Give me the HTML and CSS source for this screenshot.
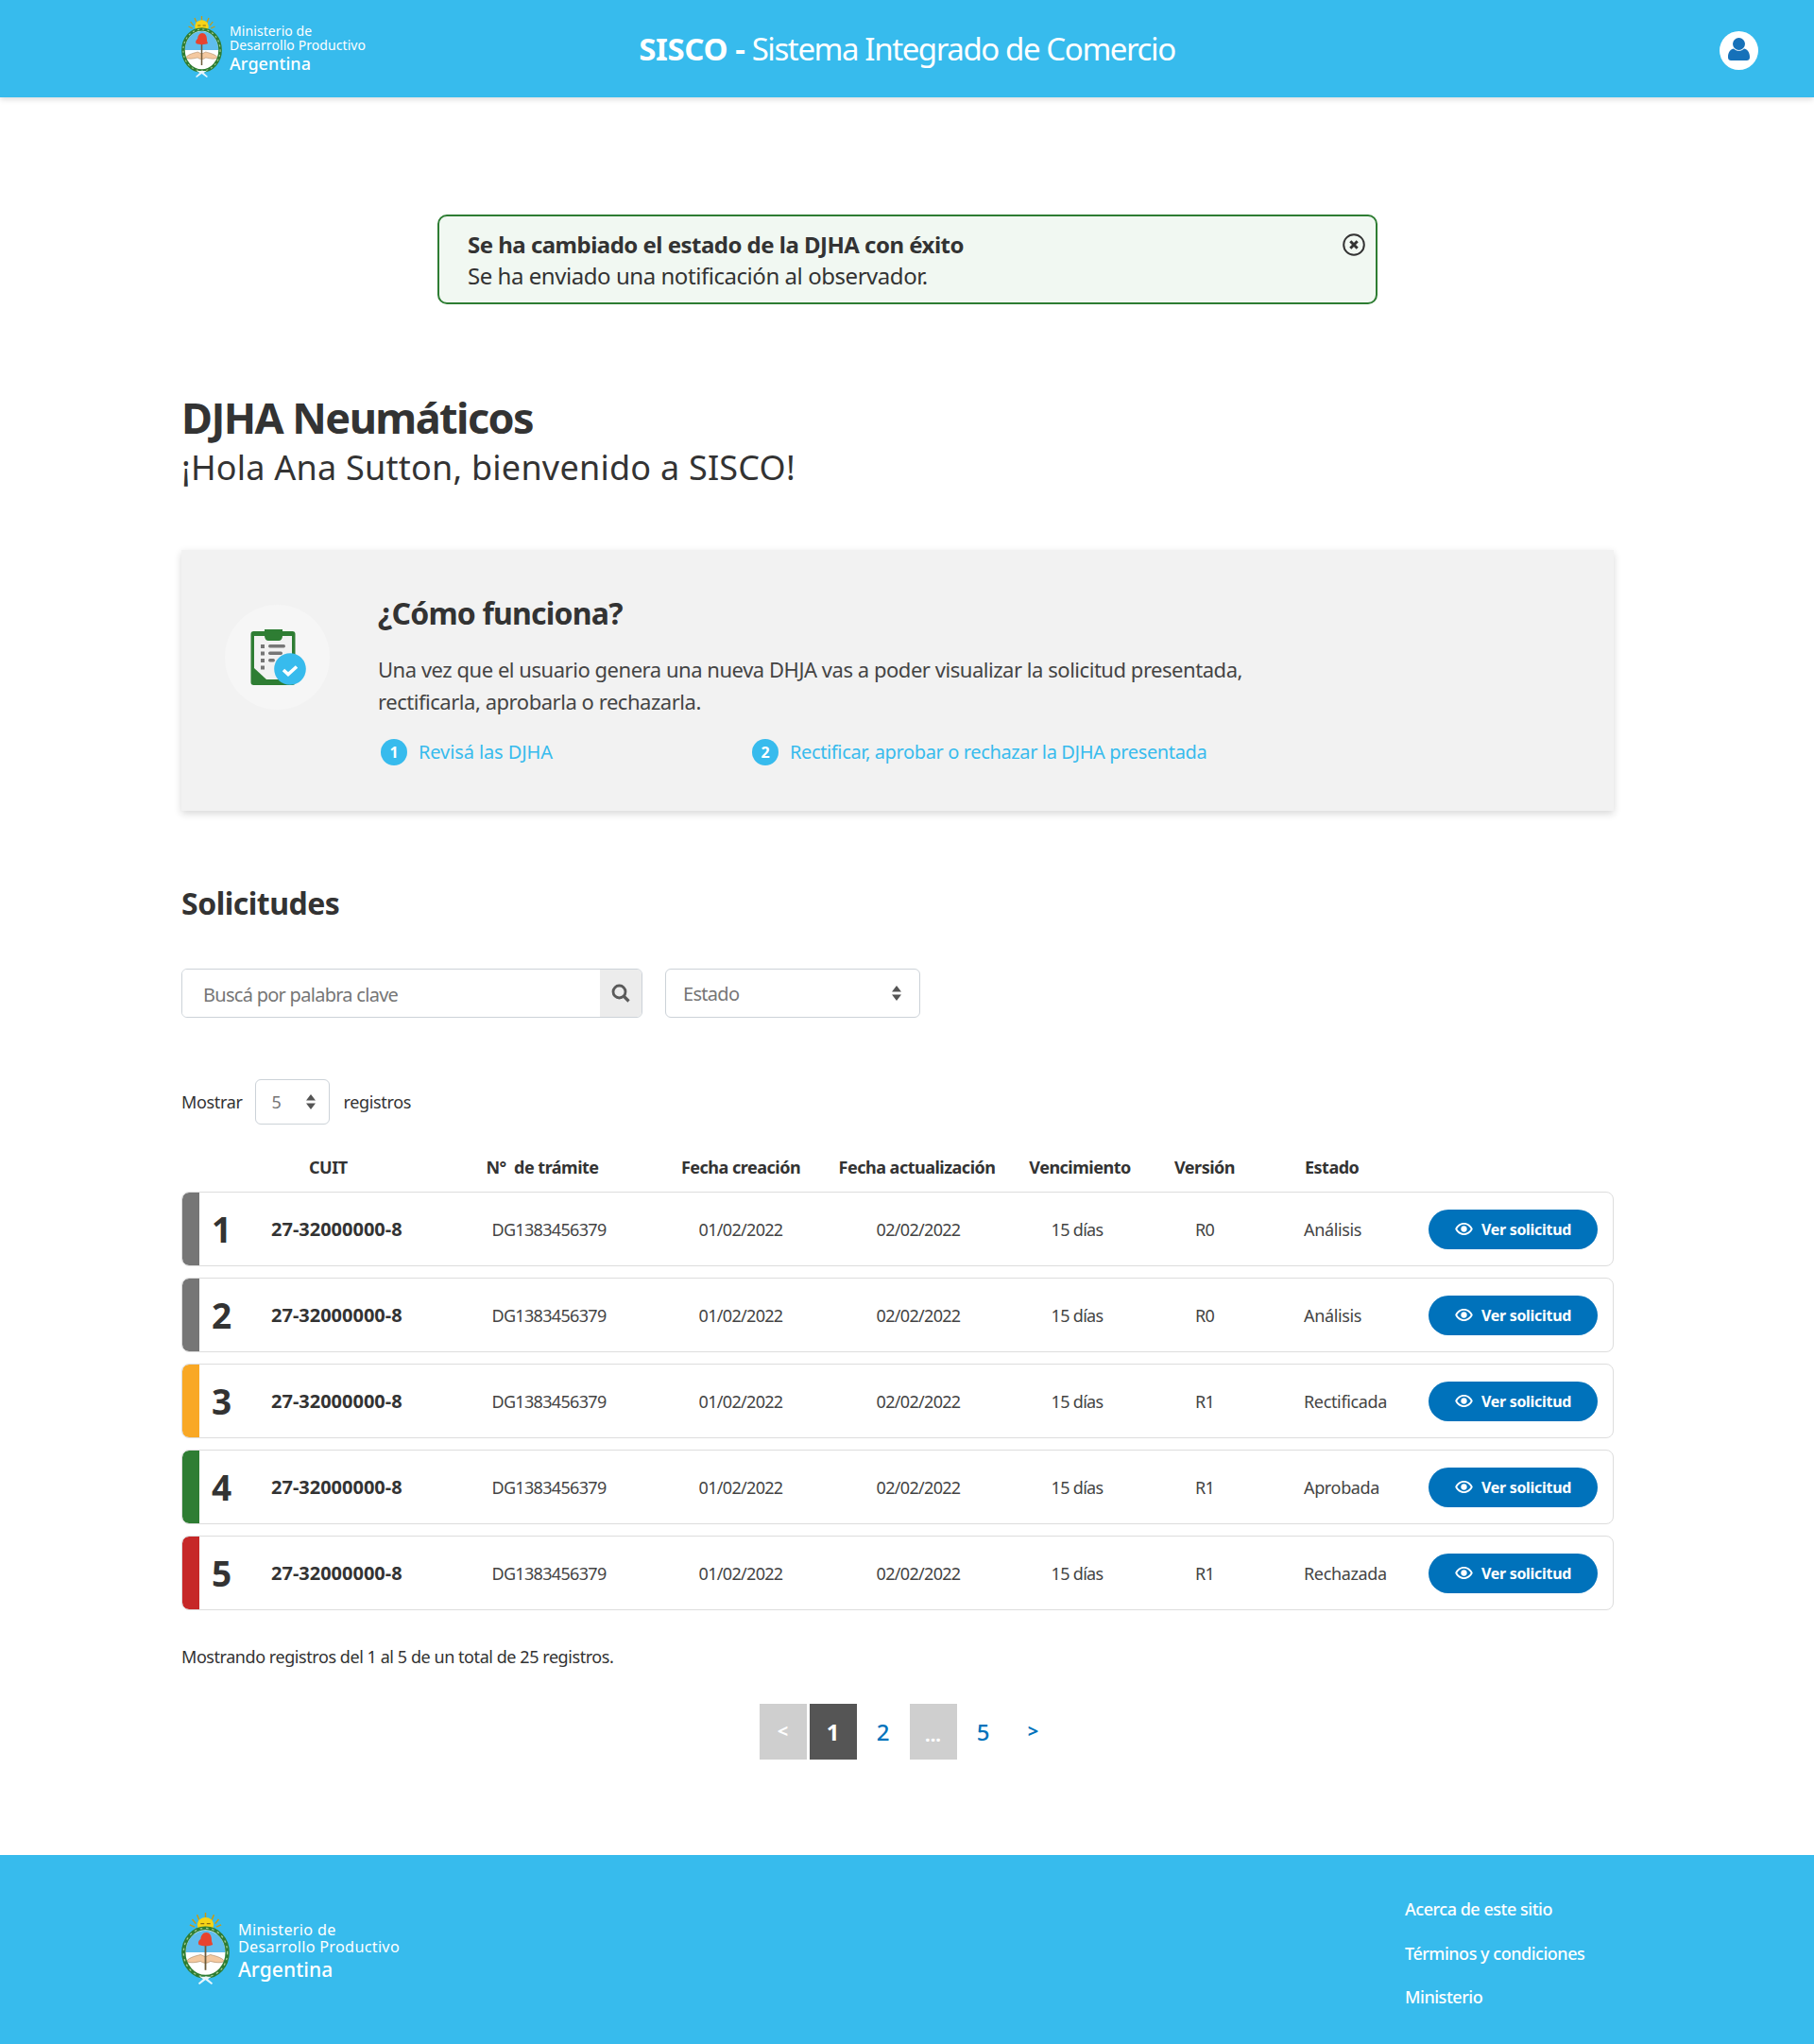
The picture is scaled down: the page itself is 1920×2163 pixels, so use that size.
FILE: index.html
```html
<!DOCTYPE html>
<html lang="es">
<head>
<meta charset="utf-8">
<title>SISCO</title>
<link rel="stylesheet" href="styles.css">
</head>
<body>
<svg class="defs" width="0" height="0" aria-hidden="true">
  <symbol id="escudo" viewBox="0 0 40 65" preserveAspectRatio="none">
    <g stroke="#c99a12" stroke-width="1.200">
      <path d="M20 0v5M13 2l2 5M27 2l-2 5M9 6l3 4M31 6l-3 4M7 11l4 2M33 11l-4 2"/>
    </g>
    <circle cx="20" cy="11" r="6.800" fill="#f7d417"/>
    <path d="M16 10h3M21 10h3M18 14h4" stroke="#8a6d10" stroke-width="1"/>
    <ellipse cx="20" cy="36" rx="18.200" ry="22" fill="#fff"/>
    <path d="M3.500 36a16.500 20 0 0 1 33 0z" fill="#5fbdec"/>
    <path d="M4 44c3-4 9-5 12-6l4 2 4-2c3 1 9 2 12 6-4 2-8 1-12 0-2 2-6 2-8 0-4 1-8 2-12 0z" fill="#f4c9a0" stroke="#a4805a" stroke-width=".5"/>
    <path d="M19.300 27h1.400v25h-1.400z" fill="#6b5a3a"/>
    <path d="M14.500 29c-1-2 0-4 1.500-5 0-3 2-6 4.500-6 3 0 4.500 3 4.500 6s1 4 1 5c-3 1.500-8.500 1.500-11.500 0z" fill="#e8432e"/>
    <ellipse cx="20" cy="36" rx="18.200" ry="22" fill="none" stroke="#2e7d33" stroke-width="3.400"/>
    <ellipse cx="20" cy="36" rx="18.200" ry="22" fill="none" stroke="#a8cf96" stroke-width="1" stroke-dasharray="2 3"/>
    <path d="M15 58h10l-3 2 4 4-1 1-5-4-5 4-1-1 4-4z" fill="#e8f6fc"/>
  </symbol>
  <symbol id="ojo" viewBox="0 0 20 14">
    <path fill-rule="evenodd" d="M10 0C5.500 0 1.900 2.700 0 7c1.900 4.300 5.500 7 10 7s8.100-2.700 10-7c-1.900-4.300-5.500-7-10-7zm0 2c3.300 0 6 2 7.800 5-1.800 3-4.500 5-7.800 5s-6-2-7.800-5C4 4 6.700 2 10 2z" fill="#fff"/>
    <circle cx="10" cy="7" r="3.400" fill="#fff"/>
  </symbol>
  <symbol id="flechas" viewBox="0 0 10 16">
    <path d="M5 0l5 6.500H0zM5 16L0 9.500h10z" fill="#555"/>
  </symbol>
</svg>

<header class="topbar">
  <div class="brand brand-top">
    <svg class="escudo-top"><use href="#escudo"/></svg>
    <div class="brand-text">
      <span>Ministerio de<br>Desarrollo Productivo</span>
      <strong>Argentina</strong>
    </div>
  </div>
  <h2 class="app-title"><b>SISCO -</b> Sistema Integrado de Comercio</h2>
  <button class="avatar" type="button" aria-label="Usuario">
    <svg viewBox="0 0 41 41" width="41" height="41">
      <circle cx="20.500" cy="20.500" r="20.500" fill="#fff"/>
      <circle cx="20.500" cy="13.500" r="6.500" fill="#1671b9"/>
      <path d="M9 27c0-5 3-8 6-8.500 1.500 1.500 3.500 2.300 5.500 2.300s4-.8 5.500-2.300c3 .5 6 3.500 6 8.500 0 3-1 4-4 4H13c-3 0-4-1-4-4z" fill="#1671b9"/>
    </svg>
  </button>
</header>

<main class="page">
  <div class="alert">
    <div class="alert-body">
      <strong>Se ha cambiado el estado de la DJHA con éxito</strong>
      <p>Se ha enviado una notificación al observador.</p>
    </div>
    <svg class="alert-close" viewBox="0 0 24 24" width="24" height="24">
      <circle cx="12" cy="12" r="10.800" fill="none" stroke="#333" stroke-width="2"/>
      <path d="M8.300 8.300l7.400 7.400M15.700 8.300l-7.400 7.400" stroke="#333" stroke-width="3"/>
    </svg>
  </div>

  <h1 class="page-title">DJHA Neumáticos</h1>
  <p class="page-sub">¡Hola Ana Sutton, bienvenido a SISCO!</p>

  <section class="help">
    <div class="help-icon">
      <svg viewBox="0 0 60 60" width="60" height="60">
        <rect x="1.500" y="2" width="47" height="57" rx="3" fill="#2e7d33"/>
        <path d="M5 7h40v46H18L5 41z" fill="#f2f2f2"/>
        <path d="M16 0h19v7c0 3-2 5-4 5H20c-2 0-4-2-4-5z" fill="#2e7d33"/>
        <path d="M12 16h4v4h-4zM12 23.500h4v4h-4zM12 31h4v4h-4zM12 38.500h4v4h-4z" fill="#767676"/>
        <rect x="20" y="16" width="18" height="3.500" rx="1.700" fill="#767676"/>
        <rect x="20" y="23.500" width="15" height="3.500" rx="1.700" fill="#767676"/>
        <rect x="20" y="31" width="7" height="3.500" rx="1.700" fill="#767676"/>
        <circle cx="43" cy="42" r="16.800" fill="#37bbed"/>
        <path d="M36 43l5 4.500 9-8" fill="none" stroke="#fff" stroke-width="3.600"/>
      </svg>
    </div>
    <div class="help-body">
      <h3>¿Cómo funciona?</h3>
      <p>Una vez que el usuario genera una nueva DHJA vas a poder visualizar la solicitud presentada,<br>rectificarla, aprobarla o rechazarla.</p>
      <ol class="steps">
        <li class="step step-one"><span class="step-num">1</span>Revisá las DJHA</li>
        <li class="step"><span class="step-num">2</span>Rectificar, aprobar o rechazar la DJHA presentada</li>
      </ol>
    </div>
  </section>

  <h2 class="section-title">Solicitudes</h2>

  <div class="filters">
    <div class="search">
      <input class="search-input" type="text" placeholder="Buscá por palabra clave">
      <span class="search-btn">
        <svg viewBox="0 0 20 20" width="20" height="20">
          <circle cx="8.500" cy="8.500" r="6.500" fill="none" stroke="#5a5a5a" stroke-width="2.800"/>
          <path d="M13.500 13.500l5 5" stroke="#5a5a5a" stroke-width="3.200"/>
        </svg>
      </span>
    </div>
    <div class="select select-estado">
      <span>Estado</span>
      <svg class="arrows"><use href="#flechas"/></svg>
    </div>
  </div>

  <div class="length">
    <span>Mostrar</span>
    <div class="select select-len">
      <span>5</span>
      <svg class="arrows"><use href="#flechas"/></svg>
    </div>
    <span>registros</span>
  </div>

  <div class="grid-row thead">
    <span></span>
    <span class="th-cuit">CUIT</span>
    <span class="th-tramite">N°&nbsp; de trámite</span>
    <span class="c">Fecha creación</span>
    <span class="c th-act">Fecha actualización</span>
    <span class="c th-venc">Vencimiento</span>
    <span class="c">Versión</span>
    <span class="th-estado">Estado</span>
    <span></span>
  </div>

  <ul class="rows">
    <li class="grid-row row st-grey">
      <span class="num">1</span><b class="cuit">27-32000000-8</b><span class="c">DG1383456379</span><span class="c">01/02/2022</span><span class="c">02/02/2022</span><span class="c">15 días</span><span class="c">R0</span><span class="estado">Análisis</span>
      <a class="btn"><svg class="eye"><use href="#ojo"/></svg>Ver solicitud</a>
    </li>
    <li class="grid-row row st-grey">
      <span class="num">2</span><b class="cuit">27-32000000-8</b><span class="c">DG1383456379</span><span class="c">01/02/2022</span><span class="c">02/02/2022</span><span class="c">15 días</span><span class="c">R0</span><span class="estado">Análisis</span>
      <a class="btn"><svg class="eye"><use href="#ojo"/></svg>Ver solicitud</a>
    </li>
    <li class="grid-row row st-orange">
      <span class="num">3</span><b class="cuit">27-32000000-8</b><span class="c">DG1383456379</span><span class="c">01/02/2022</span><span class="c">02/02/2022</span><span class="c">15 días</span><span class="c">R1</span><span class="estado">Rectificada</span>
      <a class="btn"><svg class="eye"><use href="#ojo"/></svg>Ver solicitud</a>
    </li>
    <li class="grid-row row st-green">
      <span class="num">4</span><b class="cuit">27-32000000-8</b><span class="c">DG1383456379</span><span class="c">01/02/2022</span><span class="c">02/02/2022</span><span class="c">15 días</span><span class="c">R1</span><span class="estado">Aprobada</span>
      <a class="btn"><svg class="eye"><use href="#ojo"/></svg>Ver solicitud</a>
    </li>
    <li class="grid-row row st-red">
      <span class="num">5</span><b class="cuit">27-32000000-8</b><span class="c">DG1383456379</span><span class="c">01/02/2022</span><span class="c">02/02/2022</span><span class="c">15 días</span><span class="c">R1</span><span class="estado">Rechazada</span>
      <a class="btn"><svg class="eye"><use href="#ojo"/></svg>Ver solicitud</a>
    </li>
  </ul>

  <p class="info">Mostrando registros del 1 al 5 de un total de 25 registros.</p>

  <nav class="pager">
    <a class="pg pg-off pg-small">&lt;</a>
    <a class="pg pg-on">1</a>
    <a class="pg">2</a>
    <a class="pg pg-off pg-dots">...</a>
    <a class="pg">5</a>
    <a class="pg pg-small">&gt;</a>
  </nav>
</main>

<footer class="foot">
  <div class="brand brand-foot">
    <svg class="escudo-foot"><use href="#escudo"/></svg>
    <div class="brand-text">
      <span>Ministerio de<br>Desarrollo Productivo</span>
      <strong>Argentina</strong>
    </div>
  </div>
  <ul class="foot-links">
    <li>Acerca de este sitio</li>
    <li>Términos y condiciones</li>
    <li>Ministerio</li>
  </ul>
</footer>
</body>
</html>
```
FILE: styles.css
```css
* { box-sizing: border-box; }
html, body { margin: 0; padding: 0; }
body {
  font-family: "Noto Sans", "Open Sans", sans-serif;
  color: #333;
  background: #fff;
  font-size: 18px;
}
.defs { position: absolute; }
h1, h2, h3, p, ul, ol { margin: 0; padding: 0; }
ul, ol { list-style: none; }

/* header */
.topbar {
  height: 103px;
  background: #37bbed;
  box-shadow: 0 2px 6px rgba(0,0,0,.15);
  padding: 0 59px;
  display: grid;
  grid-template-columns: 1fr auto 1fr;
  align-items: center;
  color: #fff;
}
.brand { display: flex; align-items: center; color: #fff; }
.brand-text { display: flex; flex-direction: column; }
.brand-text strong { font-weight: 500; }
.brand-top { gap: 8px; margin: -4px 0 0 133px; }
.brand-top .brand-text {
  font-size: 14px;
  line-height: 15px;
  padding-top: 6px;
  letter-spacing: .08px;
}
.brand-top .brand-text strong { font-size: 18px; line-height: 25px; }
.escudo-top { width: 43px; height: 65px; }
.app-title {
  font-weight: 400;
  font-size: 33px;
  letter-spacing: -1.4px;
}
.app-title b { font-weight: 700; letter-spacing: -.4px; }
.avatar {
  justify-self: end;
  background: none;
  border: 0;
  padding: 0;
  width: 41px;
  height: 41px;
  margin-top: 4px;
}
.avatar svg { display: block; }

/* page */
.page { padding: 0 212px 0 192px; }

.alert {
  width: 995px;
  height: 95px;
  margin: 124px 0 0 271px;
  border: 2px solid #2e7d33;
  border-radius: 10px;
  background: #f1f8f2;
  display: flex;
  justify-content: space-between;
  padding: 13px 11px 0 30px;
  font-size: 24px;
  line-height: 33px;
  letter-spacing: -.45px;
}
.alert-body strong { font-weight: 700; letter-spacing: -.52px; }
.alert-close { margin-top: 5px; }

.page-title {
  font-size: 45px;
  line-height: 60px;
  font-weight: 700;
  margin-top: 90px;
  letter-spacing: -1.56px;
}
.page-sub {
  font-size: 36px;
  line-height: 46px;
  letter-spacing: .23px;
}

.help {
  margin-top: 64px;
  height: 276px;
  background: #f2f2f2;
  box-shadow: 0 3px 8px rgba(0,0,0,.16);
  display: flex;
  padding: 58px 0 0 46px;
}
.help-icon {
  width: 111px;
  height: 111px;
  border-radius: 50%;
  background: #f6f6f6;
  display: flex;
  align-items: center;
  justify-content: center;
  flex: none;
}
.help-body { margin: -13px 0 0 51px; }
.help-body h3 {
  font-size: 32px;
  line-height: 44px;
  font-weight: 700;
  letter-spacing: -.8px;
}
.help-body p {
  font-size: 22px;
  line-height: 34px;
  margin-top: 20px;
  color: #444;
  letter-spacing: -.46px;
}
.steps {
  display: flex;
  margin-top: 22px;
  padding-left: 3px;
  color: #37bbed;
  font-size: 20px;
  line-height: 30px;
  letter-spacing: -.37px;
}
.step { display: flex; align-items: center; gap: 12px; }
.step-one { width: 393px; letter-spacing: -.1px; }
.step-num {
  width: 28px;
  height: 28px;
  border-radius: 50%;
  background: #37bbed;
  color: #fff;
  font-size: 16px;
  font-weight: 700;
  display: flex;
  align-items: center;
  justify-content: center;
}

.section-title {
  font-size: 32px;
  line-height: 44px;
  font-weight: 700;
  margin-top: 76px;
  letter-spacing: -.5px;
}

.filters { display: flex; gap: 24px; margin-top: 47px; }
.search {
  width: 488px;
  height: 52px;
  display: flex;
  border: 1px solid #ccd2d8;
  border-radius: 6px;
  overflow: hidden;
}
.search-input {
  flex: 1;
  min-width: 0;
  border: 0;
  outline: 0;
  padding: 2px 0 0 22px;
  font: inherit;
  font-size: 20px;
  letter-spacing: -.72px;
  color: #333;
}
.search-input::placeholder { color: #767676; opacity: 1; }
.search-btn {
  width: 44px;
  background: #ececec;
  display: flex;
  align-items: center;
  justify-content: center;
}
.select {
  display: flex;
  align-items: center;
  justify-content: space-between;
  border: 1px solid #ccd2d8;
  border-radius: 6px;
  color: #767676;
}
.select-estado {
  width: 270px;
  height: 52px;
  padding: 0 19px 0 18px;
  font-size: 20px;
  letter-spacing: -.7px;
}
.select-len {
  width: 79px;
  height: 48px;
  padding: 0 14px 0 17px;
  font-size: 18px;
  margin-right: 2px;
}
.arrows { width: 10px; height: 16px; }

.length {
  display: flex;
  align-items: center;
  gap: 13px;
  margin-top: 65px;
  font-size: 18px;
  letter-spacing: -.35px;
}

.grid-row {
  display: grid;
  grid-template-columns: 87px 190px 222px 184px 192px 144px 126px 174px 179px;
  align-items: center;
}
.thead {
  margin-top: 19px;
  height: 52px;
  padding: 0 1px;
  font-weight: 700;
  font-size: 18px;
  white-space: nowrap;
  letter-spacing: -.5px;
}
.c { text-align: center; }
.th-cuit { padding-left: 47px; }
.th-tramite { text-align: center; padding-right: 14px; }
.th-act { padding-right: 3px; }
.th-venc { padding-left: 6px; }
.th-estado { padding-left: 43px; }

.rows { display: flex; flex-direction: column; gap: 12px; }
.row {
  height: 79px;
  border: 1px solid #ddd;
  border-radius: 8px;
  padding-left: 18px;
  grid-template-columns: 69px 190px 222px 184px 192px 144px 126px 174px 179px;
  font-size: 18px;
  color: #444;
  white-space: nowrap;
  letter-spacing: -.68px;
  background-clip: padding-box;
}
.st-grey { background-image: linear-gradient(to right, #767676 18px, #fff 18px); }
.st-orange { background-image: linear-gradient(to right, #f9a825 18px, #fff 18px); }
.st-green { background-image: linear-gradient(to right, #2e7d33 18px, #fff 18px); }
.st-red { background-image: linear-gradient(to right, #c62828 18px, #fff 18px); }
.num {
  font-size: 37px;
  line-height: 50px;
  font-weight: 700;
  color: #333;
  padding-left: 13px;
  letter-spacing: 0;
}
.cuit {
  font-weight: 700;
  font-size: 20px;
  color: #333;
  padding-left: 7px;
  letter-spacing: 0;
}
.estado { padding-left: 42px; letter-spacing: -.35px; }
.btn {
  width: 179px;
  height: 42px;
  border-radius: 21px;
  background: #0072bb;
  color: #fff;
  font-size: 16px;
  font-weight: 700;
  display: flex;
  align-items: center;
  justify-content: center;
  gap: 9px;
  letter-spacing: -.3px;
}
.eye { width: 19px; height: 13px; }

.info {
  margin-top: 37px;
  font-size: 18px;
  line-height: 25px;
  letter-spacing: -.44px;
}

.pager {
  display: flex;
  justify-content: center;
  gap: 3px;
  margin: 37px 0 0 22px;
}
.pg {
  width: 50px;
  height: 59px;
  display: flex;
  align-items: center;
  justify-content: center;
  font-size: 24px;
  color: #0072bb;
  font-weight: 500;
}
.pg-small { font-size: 20px; font-weight: 700; padding-bottom: 3px; }
.pg-off { background: #cfcfcf; color: #fff; }
.pg-on { background: #555; color: #fff; font-weight: 700; }
.pg-dots { font-weight: 700; font-size: 20px; padding-top: 6px; }

.foot {
  margin-top: 101px;
  height: 200px;
  background: #37bbed;
  color: #fff;
  display: flex;
  justify-content: space-between;
  padding: 0 0 0 192px;
}
.brand-foot { gap: 9px; margin-top: -3px; }
.brand-foot .brand-text { font-size: 16.200px; line-height: 18.500px; padding-top: 7px; letter-spacing: .3px; }
.brand-foot .brand-text strong { font-size: 21px; line-height: 28px; letter-spacing: .1px; }
.escudo-foot { width: 51px; height: 76px; }
.foot-links {
  width: 433px;
  padding-top: 43px;
  font-size: 18px;
  line-height: 28px;
  font-weight: 500;
  letter-spacing: -.48px;
  display: flex;
  flex-direction: column;
  gap: 18.500px;
}
```
